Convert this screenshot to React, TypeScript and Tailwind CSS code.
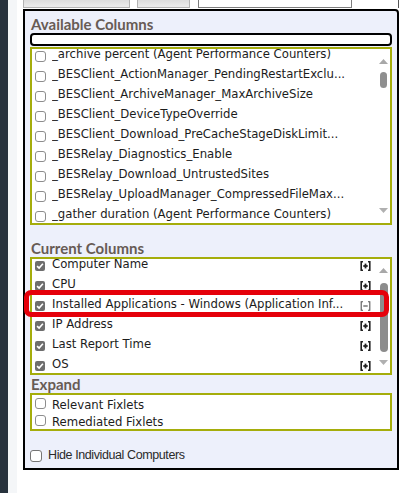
import React from "react";

function Box({ checked }: { checked?: boolean }) {
  if (checked) {
    return (
      <span className="w-[10px] h-[10px] mt-[6.5px] rounded-[2px] bg-[#6e6e6e] flex items-center justify-center shrink-0">
        <svg width="8" height="8" viewBox="0 0 8 8">
          <path d="M1.1 4.1 L3.1 6.1 L6.9 1.7" stroke="#ffffff" strokeWidth="1.6" fill="none" />
        </svg>
      </span>
    );
  }
  return <span className="w-[11px] h-[11px] mt-[6.5px] rounded-[3px] border border-[#8d8d8d] bg-white shrink-0" />;
}

function Expander({ open }: { open?: boolean }) {
  const c = open ? "#555555" : "#222222";
  const w = open ? 1.1 : 1.6;
  return (
    <svg width="11" height="10" viewBox="0 0 11 10" className="mt-[7px] shrink-0">
      <path d="M3 0.8 H1.2 V9.2 H3" stroke={c} strokeWidth={w} fill="none" />
      <path d="M8 0.8 H9.8 V9.2 H8" stroke={c} strokeWidth={w} fill="none" />
      <path d="M3.3 5 H7.7" stroke={c} strokeWidth={open ? 1.2 : 1.8} />
      {!open && <path d="M5.5 2.6 V7.4" stroke={c} strokeWidth="1.8" />}
    </svg>
  );
}

function Arrow({ up, color }: { up?: boolean; color: string }) {
  return (
    <svg width="9" height="5" viewBox="0 0 9 5" className="shrink-0">
      <polygon points={up ? "0,5 4.5,0 9,5" : "0,0 4.5,5 9,0"} fill={color} />
    </svg>
  );
}

const available = [
  "_archive percent (Agent Performance Counters)",
  "_BESClient_ActionManager_PendingRestartExclu...",
  "_BESClient_ArchiveManager_MaxArchiveSize",
  "_BESClient_DeviceTypeOverride",
  "_BESClient_Download_PreCacheStageDiskLimit...",
  "_BESRelay_Diagnostics_Enable",
  "_BESRelay_Download_UntrustedSites",
  "_BESRelay_UploadManager_CompressedFileMax...",
  "_gather duration (Agent Performance Counters)",
];

const current = [
  { t: "Computer Name" },
  { t: "CPU" },
  { t: "Installed Applications - Windows (Application Inf...", open: true },
  { t: "IP Address" },
  { t: "Last Report Time" },
  { t: "OS" },
];

const heading = "font-['Lato',sans-serif] font-bold text-[15px] text-[#675b55] pl-[1px] whitespace-nowrap";
const listText = "font-['DejaVu_Sans',sans-serif] text-[11.7px] text-[#1c1c1c] leading-[20px] whitespace-nowrap overflow-hidden";

export default function App() {
  return (
    <div className="w-[400px] h-[493px] bg-white flex overflow-hidden">
      <div className="w-[8px] h-full bg-[#27323d] shrink-0" />
      <div className="w-[9px] h-full bg-[#f4f6f8] shrink-0" />
      <div className="w-[6px] h-full shrink-0" />
      <div className="flex-1 flex flex-col">
        <div className="h-[8px] flex shrink-0">
          <div className="w-[107px] h-full bg-gradient-to-b from-[#dcdcdc] to-[#ececec] border border-t-0 border-[#b3b3b3]" />
          <div className="w-[7px]" />
          <div className="w-[53px] h-full bg-gradient-to-b from-[#dcdcdc] to-[#ececec] border border-t-0 border-[#b3b3b3]" />
          <div className="w-[8px]" />
          <div className="w-[154px] h-full bg-white border border-t-0 border-[#7d7d7d]" />
          <div className="flex-1" />
          <div className="w-[1px] h-full bg-[#555]" />
          <div className="w-[1px]" />
        </div>
        <div className="mt-[1px] w-[376px] h-[461px] border-2 border-black rounded-tr-[4px] bg-[#edf0fb] relative flex flex-col px-[5px] pt-[4px]">
          <div className={`${heading} leading-[18px]`}>Available Columns</div>
          <div className="h-[13px] border-2 border-black rounded-[4px] bg-white shrink-0" />
          <div className="mt-[1px] h-[178px] border-2 border-[#a5ad0b] bg-white flex shrink-0 overflow-hidden">
            <div className="flex-1 min-w-0 overflow-hidden">
              <div className="-mt-[5px]">
                {available.map((t) => (
                  <div key={t} className="h-[20px] flex items-start pl-[3px] gap-[6px]">
                    <Box />
                    <span className={listText}>{t}</span>
                  </div>
                ))}
              </div>
            </div>
            <div className="w-[13px] flex flex-col items-center pt-[10px] pb-[10px] shrink-0">
              <Arrow up color="#a8a8a8" />
              <div className="mt-[8px] w-[7px] h-[16px] rounded-full bg-[#8f8f8f]" />
              <div className="flex-1" />
              <Arrow color="#b0b0b0" />
            </div>
          </div>
          <div className={`${heading} leading-[18px] mt-[14px]`}>Current Columns</div>
          <div className="h-[118px] border-2 border-[#a5ad0b] bg-white flex shrink-0 overflow-hidden">
            <div className="flex-1 min-w-0 overflow-hidden">
              <div className="-mt-[5px]">
                {current.map((r) => (
                  <div key={r.t} className="h-[20px] flex items-start pl-[3px] gap-[7px] pr-[6px]">
                    <Box checked />
                    <span className={`${listText} flex-1 min-w-0`}>{r.t}</span>
                    <Expander open={r.open} />
                  </div>
                ))}
              </div>
            </div>
            <div className="w-[13px] flex flex-col items-center pt-[9px] pb-[8px] shrink-0">
              <Arrow up color="#a8a8a8" />
              <div className="mt-[10px] w-[8px] h-[69px] rounded-full bg-[#8c8c8c]" />
              <div className="flex-1" />
              <Arrow color="#b0b0b0" />
            </div>
          </div>
          <div className={`${heading} leading-[17px] mt-[1px]`}>Expand</div>
          <div className="h-[38px] border-2 border-[#a5ad0b] bg-white shrink-0 overflow-hidden pt-[1.5px]">
            {["Relevant Fixlets", "Remediated Fixlets"].map((t) => (
              <div key={t} className="h-[17px] flex items-start pl-[3px] gap-[6px]">
                <span className="w-[11px] h-[11px] mt-[1.5px] rounded-[3px] border border-[#8d8d8d] bg-white shrink-0" />
                <span className="font-['DejaVu_Sans',sans-serif] text-[11.7px] text-[#1c1c1c] leading-[17px] whitespace-nowrap">{t}</span>
              </div>
            ))}
          </div>
          <div className="mt-[18px] h-[13px] flex items-center gap-[6px]">
            <span className="w-[12px] h-[12px] rounded-[3px] border border-[#767676] bg-white shrink-0" />
            <span className="font-['Liberation_Sans',sans-serif] text-[12.5px] tracking-[-0.4px] leading-[13px] text-[#2a2a2a] whitespace-nowrap">
              Hide Individual Computers
            </span>
          </div>
          <div className="absolute left-[-1px] top-[279px] w-[365px] h-[27px] border-[5px] border-[#e5000a] rounded-[7px] pointer-events-none" />
        </div>
      </div>
    </div>
  );
}
